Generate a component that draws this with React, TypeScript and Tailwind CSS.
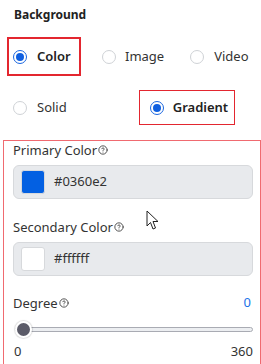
import { CircleHelp } from "lucide-react";

function Radio({ checked }: { checked?: boolean }) {
  return checked ? (
    <span className="flex h-[14px] w-[14px] shrink-0 items-center justify-center rounded-full border-[1.5px] border-[#1a66e0] bg-white">
      <span className="h-[8px] w-[8px] rounded-full bg-[#0f5fe0]" />
    </span>
  ) : (
    <span className="h-[14px] w-[14px] shrink-0 rounded-full border border-[#cfd2d6] bg-white" />
  );
}

function Label({ text }: { text: string }) {
  return (
    <div className="flex items-center text-[13px] leading-[18px] text-[#333]">
      <span>{text}</span>
      <CircleHelp size={10} strokeWidth={2.2} className="ml-[1px] text-[#444]" />
    </div>
  );
}

function ColorInput({ swatch, value }: { swatch: string; value: string }) {
  return (
    <div className="mt-[6px] flex h-[34px] items-center rounded-md border border-[#d7d9dc] bg-[#e8eaed] pl-[7px]">
      <span
        className={`h-[24px] w-[24px] rounded-[3px] border border-[#d7d9dc] ${swatch}`}
      />
      <span className="ml-[9px] text-[13px] text-[#333]">{value}</span>
    </div>
  );
}

export default function App() {
  return (
    <div
      className="relative h-[364px] w-[261px] overflow-hidden bg-white"
      style={{ fontFamily: '"Noto Sans", "Open Sans", sans-serif' }}
    >
      {/* Header */}
      <div className="pl-[14px] pt-[6px] text-[12px] font-bold leading-[18px] text-[#222]">
        Background
      </div>

      {/* Type radios */}
      <div className="mt-[13px] flex items-center text-[13px] text-[#333]">
        <div className="ml-[7px] flex h-[39px] w-[74px] items-center border-2 border-[#e3262f] pl-[4px]">
          <Radio checked />
          <span className="ml-[10px] font-semibold text-[#222]">Color</span>
        </div>
        <div className="ml-[21px] flex items-center">
          <Radio />
          <span className="ml-[9px]">Image</span>
        </div>
        <div className="ml-[26px] flex items-center">
          <Radio />
          <span className="ml-[10px]">Video</span>
        </div>
      </div>

      {/* Fill radios */}
      <div className="mt-[14px] flex items-center text-[13px] text-[#333]">
        <div className="ml-[13px] flex items-center">
          <Radio />
          <span className="ml-[10px]">Solid</span>
        </div>
        <div className="ml-[72px] flex h-[35px] w-[96px] items-center border border-[#e3262f] pl-[10px]">
          <Radio checked />
          <span className="ml-[9px] font-semibold text-[#222]">Gradient</span>
        </div>
      </div>

      {/* Gradient panel */}
      <div className="ml-[3px] mt-[15px] border border-[#f06a70] pb-4 pl-[9px] pr-[7px]">
        <Label text="Primary Color" />
        <ColorInput swatch="bg-[#0360e2]" value="#0360e2" />

        <div className="mt-[19px]">
          <Label text="Secondary Color" />
        </div>
        <ColorInput swatch="bg-white" value="#ffffff" />

        <div className="mt-[17px] flex items-center justify-between">
          <Label text="Degree" />
          <span className="pr-[2px] text-[13px] text-[#1a73e8]">0</span>
        </div>

        <div className="relative mt-[8px] h-[18px]">
          <div className="absolute left-[2px] right-0 top-[6px] h-[5px] rounded-full border border-[#a9abb3] bg-[#eceef1]" />
          <div className="absolute left-[2px] top-0 h-[17px] w-[17px] rounded-full border-2 border-white bg-[#5b5b68] shadow-[0_0_1px_1px_rgba(0,0,0,0.12)]" />
        </div>

        <div className="mt-[3px] flex justify-between text-[13px] leading-[18px] text-[#333]">
          <span className="pl-[1px]">0</span>
          <span>360</span>
        </div>
      </div>

      {/* Mouse cursor */}
      <svg
        className="absolute left-[146px] top-[210px]"
        width="13"
        height="21"
        viewBox="0 0 13 21"
      >
        <path
          d="M1 1 L1 16 L4.5 12.5 L7 19 L9.5 18 L7 11.5 L12 11.5 Z"
          fill="white"
          stroke="#222"
          strokeWidth="1"
          strokeLinejoin="round"
        />
      </svg>
    </div>
  );
}
